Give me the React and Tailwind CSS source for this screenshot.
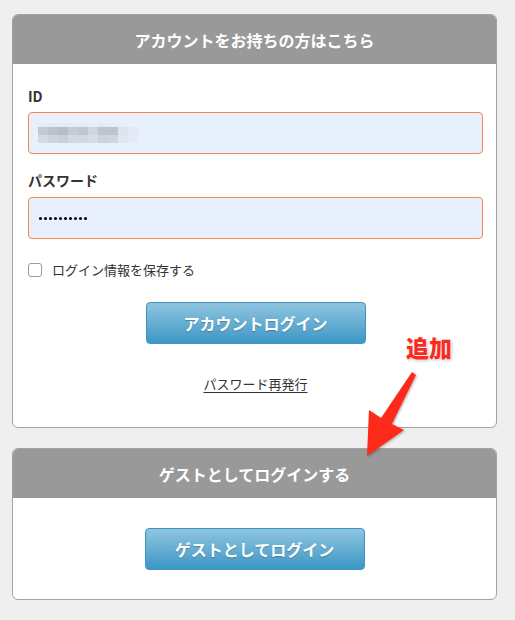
import * as React from 'react';

const mosaic = [
  ['#e4ecf6', '#c3c8d1', '#d3dae4'],
  ['#e2eaf4', '#bcc1ca', '#ccd3de'],
  ['#e3ebf5', '#b9bdc7', '#c9d0db'],
  ['#e4ecf6', '#c6cbd3', '#d2d9e3'],
  ['#e3ebf5', '#c0c5ce', '#d0d7e1'],
  ['#e5edf7', '#d0d6df', '#d6dde7'],
  ['#e3ebf5', '#bfc4cd', '#ccd3de'],
  ['#e6eef8', '#bec3cc', '#cfd6e0'],
  ['#e7eff9', '#dde4ee', '#e0e7f1'],
  ['#e8f0fb', '#e3eaf5', '#e4ebf6'],
];

function Card({ title, children, className }) {
  return (
    <div className={'ml-[12px] w-[485px] rounded-[6px] border border-[#a3a3a3] bg-white overflow-hidden ' + (className || '')}>
      <div className="h-[49px] bg-[#999999] flex items-center justify-center text-white font-bold text-[16px]">
        {title}
      </div>
      {children}
    </div>
  );
}

function BlueButton({ children }) {
  return (
    <button className="w-[220px] h-[42px] rounded-[4px] border border-[#3f93c2] bg-gradient-to-b from-[#8ec5e0] to-[#3a97c5] text-white font-bold text-[16px] [text-shadow:0_1px_1px_rgba(0,0,0,0.25)]">
      {children}
    </button>
  );
}

function App() {
  return (
    <div
      className="relative min-h-[620px] bg-[#efefef] pt-[14px] text-[#333333]"
      style={{ fontFamily: '"Noto Sans CJK JP", "Noto Sans", sans-serif' }}>
      <Card title="アカウントをお持ちの方はこちら">
        <div className="pl-[15px] pr-[13px] pt-[22px] pb-[33px]">
          <div className="text-[14px] font-bold leading-[20px]">ID</div>
          <div className="mt-[6px] h-[42px] rounded-[4px] border border-[#f5894a] bg-[#e8f0fe] flex items-center pl-[9px]">
            <div className="flex">
              {mosaic.map((col, i) => (
                <div key={i} className="flex flex-col w-[10px]">
                  <div className="h-[4px]" style={{ backgroundColor: col[0] }} />
                  <div className="h-[8px]" style={{ backgroundColor: col[1] }} />
                  <div className="h-[8px]" style={{ backgroundColor: col[2] }} />
                </div>
              ))}
            </div>
          </div>
          <div className="mt-[16px] text-[14px] font-bold leading-[20px]">パスワード</div>
          <div className="mt-[7px] h-[42px] rounded-[4px] border border-[#f5894a] bg-[#e8f0fe] flex items-center pl-[10px]">
            <div className="flex gap-[2px]">
              {Array.from({ length: 10 }).map((_, i) => (
                <span key={i} className="w-[3px] h-[3px] rounded-full bg-black" />
              ))}
            </div>
          </div>
          <label className="mt-[21px] flex items-center h-[20px] gap-[10px]">
            <span className="w-[14px] h-[14px] rounded-[3px] border border-[#9a9a9a] bg-white" />
            <span className="text-[13px]">ログイン情報を保存する</span>
          </label>
          <div className="mt-[22px] flex justify-center">
            <BlueButton>アカウントログイン</BlueButton>
          </div>
          <div className="mt-[30px] flex justify-center">
            <a className="text-[13px] leading-[20px] underline underline-offset-[3px] text-[#333333]">
              パスワード再発行
            </a>
          </div>
        </div>
      </Card>

      <Card title="ゲストとしてログインする" className="mt-[20px]">
        <div className="flex justify-center pt-[30px] pb-[29px]">
          <BlueButton>ゲストとしてログイン</BlueButton>
        </div>
      </Card>

      <div className="absolute left-[406px] top-[333px] text-[23px] font-black text-[#fb2a1e] leading-[28px] [text-shadow:0_0_2px_#fff,0_0_2px_#fff,1px_1px_3px_rgba(0,0,0,0.3)]">
        追加
      </div>
      <svg
        className="absolute left-0 top-0 pointer-events-none"
        width="515"
        height="620"
        viewBox="0 0 515 620">
        <defs>
          <filter id="sh" x="-20%" y="-20%" width="140%" height="140%">
            <feDropShadow dx="1" dy="1" stdDeviation="1.2" floodColor="#000" floodOpacity="0.3" />
          </filter>
        </defs>
        <polygon
          points="412,372 416,375 392,424 404,430 367,456 369,410 381,418"
          fill="#fd2a1f"
          filter="url(#sh)"
        />
      </svg>
    </div>
  );
}

export default App;
